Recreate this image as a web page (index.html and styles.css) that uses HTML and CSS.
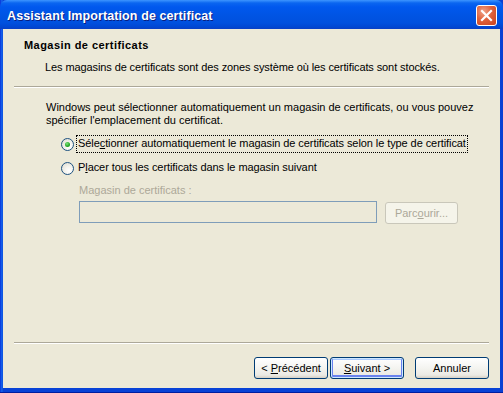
FILE: index.html
```html
<!DOCTYPE html>
<html lang="fr">
<head>
  <meta charset="UTF-8">
  <title>Assistant Importation de certificat</title>
  <link rel="stylesheet" href="styles.css">
</head>
<body>
  <div class="window">
    <div class="titlebar">
      <span class="title">Assistant Importation de certificat</span>
      <div class="close">
        <svg width="13" height="13" viewBox="0 0 13 13">
          <path d="M2 2 L11 11 M11 2 L2 11" stroke="#fff" stroke-width="2.2" stroke-linecap="square" fill="none"/>
        </svg>
      </div>
    </div>

    <div class="client">
      <div class="header">
        <div class="header-title">Magasin de certificats</div>
        <div class="header-desc">Les magasins de certificats sont des zones système où les certificats sont stockés.</div>
      </div>
      <div class="sep"></div>

      <div class="content">
        <p class="intro">Windows peut sélectionner automatiquement un magasin de certificats, ou vous pouvez<br>spécifier l'emplacement du certificat.</p>

        <div class="radio-row">
          <span class="radio checked"></span>
          <span class="radio-label focused">Séle<u>c</u>tionner automatiquement le magasin de certificats selon le type de certificat</span>
        </div>
        <div class="radio-row">
          <span class="radio"></span>
          <span class="radio-label">P<u>l</u>acer tous les certificats dans le magasin suivant</span>
        </div>

        <div class="store">
          <div class="store-label">Magasin de certificats :</div>
          <div class="store-row">
            <div class="textbox"></div>
            <div class="btn disabled"><span>Parc<u>o</u>urir...</span></div>
          </div>
        </div>
      </div>

      <div class="sep"></div>
      <div class="footer">
        <div class="btn"><span>&lt; <u>P</u>récédent</span></div>
        <div class="btn default"><span><u>S</u>uivant &gt;</span></div>
        <div class="btn cancel"><span>Annuler</span></div>
      </div>
    </div>
  </div>
</body>
</html>
```

FILE: styles.css
```css
:root {
  --face: #ece9d8;
  --text: #000000;
  --dim: #aca899;
  --line: #aca899;
}

* {
  box-sizing: border-box;
  margin: 0;
  padding: 0;
}

body {
  width: 503px;
  height: 393px;
  overflow: hidden;
  font-family: 'Liberation Sans', Arial, sans-serif;
  font-size: 11px;
  line-height: 13px;
  color: var(--text);
}

.window {
  width: 503px;
  height: 393px;
  display: flex;
  flex-direction: column;
  background: linear-gradient(to right, #0831d9 0, #166aee 2px, #0842d6 3px, #0842d6 500px, #0b3fd0 503px);
  padding: 0 3px 4px 3px;
  border-bottom: 1px solid #001ea0;
}

.titlebar {
  height: 29px;
  margin: 0 -3px;
  display: flex;
  align-items: center;
  justify-content: space-between;
  padding: 0 6px 0 7px;
  border-radius: 7px 7px 0 0;
  background: linear-gradient(#3d95ff 0, #0a66f0 3px, #0058ee 7px, #0054e3 16px, #0050de 23px, #0047d2 27px, #0a3fc4 29px);
}

.title {
  color: #ffffff;
  font-weight: bold;
  font-size: 12.5px;
  letter-spacing: 0.1px;
  text-shadow: 1px 1px #0a1e80;
  margin-top: 3px;
}

.close {
  width: 21px;
  height: 21px;
  border: 1px solid #ffffff;
  border-radius: 3px;
  background: radial-gradient(circle at 35% 30%, #f0a48a 0, #e0623c 45%, #c8421e 100%);
  display: flex;
  align-items: center;
  justify-content: center;
  margin-top: 2px;
}

.client {
  flex: 1;
  background: var(--face);
  display: flex;
  flex-direction: column;
}

.header {
  height: 57px;
  padding: 10px 0 0 21px;
}

.header-title {
  font-weight: bold;
  letter-spacing: 0.45px;
}

.header-desc {
  margin: 9px 0 0 21px;
  letter-spacing: -0.1px;
}

.sep {
  height: 2px;
  margin: 0 11px;
  border-top: 1px solid var(--line);
  border-bottom: 1px solid #ffffff;
}

.content {
  flex: 1;
  padding: 13px 0 0 43px;
}

.radio-row {
  display: flex;
  align-items: center;
  height: 16px;
  margin: 8px 0 0 15px;
}

.intro + .radio-row {
  margin-top: 9px;
}

.radio {
  width: 13px;
  height: 13px;
  border-radius: 50%;
  border: 1px solid #1c5180;
  background: radial-gradient(circle at 65% 70%, #ffffff 0, #f4f3ee 40%, #dcd9cb 100%);
  margin-right: 2px;
  display: flex;
  align-items: center;
  justify-content: center;
}

.radio.checked::after {
  content: '';
  width: 5px;
  height: 5px;
  border-radius: 50%;
  background: radial-gradient(circle at 40% 35%, #7ee27e 0, #22a422 60%, #1a8a1a 100%);
}

.radio-label {
  padding: 1px 1px 2px 1px;
  border: 1px dotted transparent;
  letter-spacing: -0.08px;
}

.radio-label.focused {
  border-color: #000000;
}

.store {
  margin: 8px 0 0 33px;
  color: var(--dim);
}

.store-row {
  display: flex;
  gap: 8px;
  margin-top: 4px;
}

.textbox {
  width: 298px;
  height: 22px;
  border: 1px solid #7f9db9;
  background: var(--face);
}

.btn {
  width: 74px;
  height: 22px;
  border: 1px solid #003c74;
  border-radius: 3px;
  background: linear-gradient(#ffffff 0, #f4f4f0 50%, #ebeae4 85%, #d6d0c5 100%);
  display: flex;
  align-items: center;
  justify-content: center;
  color: var(--text);
}

.btn.disabled {
  width: 73px;
  margin-top: 1px;
  border-color: #c9c7ba;
  background: #f5f4ea;
  color: var(--dim);
}

.btn.default {
  box-shadow: inset 0 0 0 1px #cee7ff, inset 0 -1px 0 2px #6982ee, inset 0 1px 0 1px #a9caff;
}

.footer {
  height: 44px;
  display: flex;
  justify-content: flex-end;
  gap: 2px;
  padding: 13px 11px 0 0;
}

.btn.cancel {
  margin-left: 9px;
}
```
